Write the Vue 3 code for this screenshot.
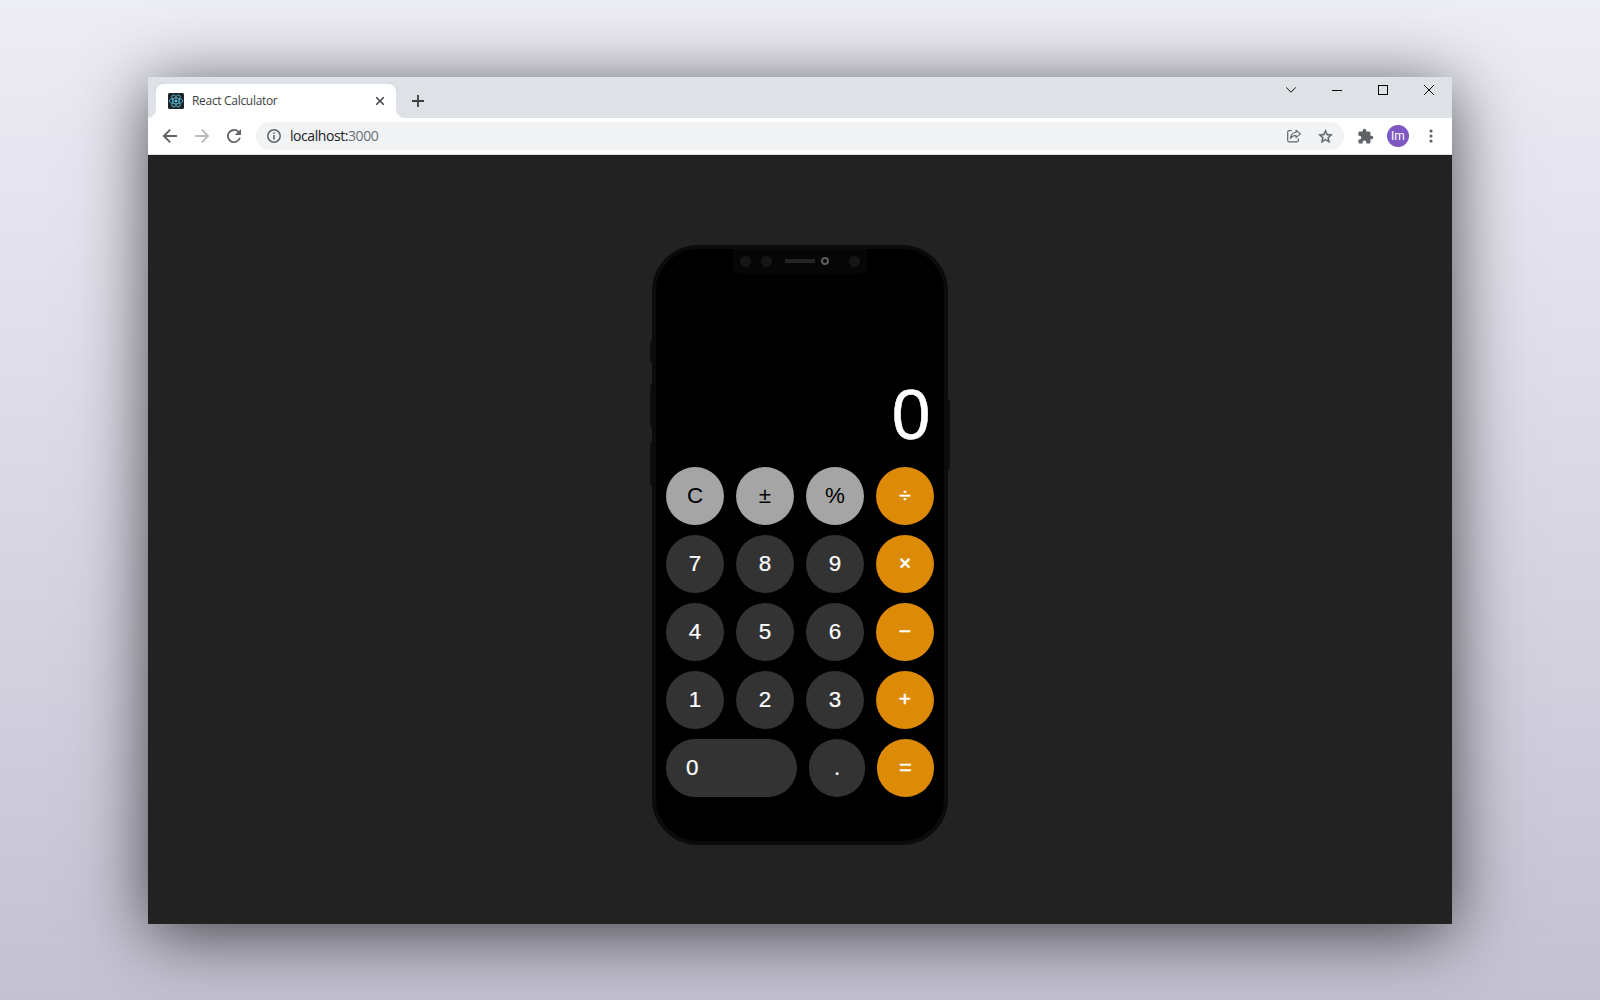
<script setup>
const rows = [
  [['C', 'light'], ['±', 'light'], ['%', 'light'], ['÷', 'op']],
  [['7', ''], ['8', ''], ['9', ''], ['×', 'op times']],
  [['4', ''], ['5', ''], ['6', ''], ['−', 'op']],
  [['1', ''], ['2', ''], ['3', ''], ['+', 'op']],
  [['0', 'zero'], ['.', 'dot'], ['=', 'op eq']],
]
</script>

<template>
  <main class="stage">
    <section class="window">
      <header class="tabbar">
        <div class="tab">
          <svg class="favicon" viewBox="0 0 16 16" width="16" height="16">
            <rect width="16" height="16" rx="1.5" fill="#202225" />
            <g fill="none" stroke="#4fb3cf" stroke-width=".85">
              <ellipse cx="8" cy="8" rx="6.8" ry="2.8" />
              <ellipse cx="8" cy="8" rx="6.8" ry="2.8" transform="rotate(60 8 8)" />
              <ellipse cx="8" cy="8" rx="6.8" ry="2.8" transform="rotate(120 8 8)" />
            </g>
            <circle cx="8" cy="8" r="1.3" fill="#61dafb" />
          </svg>
          <span class="title">React Calculator</span>
          <svg class="tab-close" viewBox="0 0 10 10" width="10" height="10">
            <path d="M1.2 1.2 8.8 8.8M8.8 1.2 1.2 8.8" stroke="#45494d" stroke-width="1.6" />
          </svg>
        </div>
        <svg class="plus" viewBox="0 0 12 12" width="12" height="12">
          <path d="M6 0V12M0 6H12" stroke="#3c4043" stroke-width="1.8" />
        </svg>
        <div class="controls">
          <svg viewBox="0 0 10 10" width="10" height="10"><path d="M.2 2.3 5 7.3 9.8 2.3" fill="none" stroke="#111" /></svg>
          <svg viewBox="0 0 10 10" width="10" height="10"><path d="M0 5.5H10" stroke="#000" /></svg>
          <svg viewBox="0 0 10 10" width="10" height="10"><rect x=".5" y=".5" width="9" height="9" fill="none" stroke="#000" /></svg>
          <svg viewBox="0 0 10 10" width="10" height="10"><path d="M0 0 10 10M10 0 0 10" stroke="#000" /></svg>
        </div>
      </header>

      <nav class="toolbar">
        <svg class="nav-icon" viewBox="0 0 16 16" width="16" height="16">
          <path d="M15 8H2.4M8.2 1.7 1.9 8l6.3 6.3" fill="none" stroke="#5f6368" stroke-width="1.9" />
        </svg>
        <svg class="nav-icon" viewBox="0 0 16 16" width="16" height="16">
          <path d="M1 8H13.6M7.8 1.7 14.1 8l-6.3 6.3" fill="none" stroke="#babcbe" stroke-width="1.9" />
        </svg>
        <svg class="nav-icon" viewBox="0 0 16 16" width="16" height="16">
          <path d="M12.95 3.05A7 7 0 1 0 14.8 9.8h-1.9A5.2 5.2 0 1 1 11.6 4.3L8.8 7.1H15V1Z" fill="#5f6368" />
        </svg>
        <div class="omnibox">
          <svg viewBox="0 0 14 14" width="14" height="14">
            <circle cx="7" cy="7" r="6.2" fill="none" stroke="#5f6368" stroke-width="1.5" />
            <path d="M7 6.1V10.4M7 3.4V5" stroke="#5f6368" stroke-width="1.6" />
          </svg>
          <span class="url">localhost:<span class="port">3000</span></span>
          <svg class="share" viewBox="0 0 14 14" width="14" height="14">
            <path d="M4.6 1.7H2.2Q.7 1.7.7 3.2V11.3Q.7 12.8 2.2 12.8H9.9Q11.4 12.8 11.4 11.3V9.6" fill="none" stroke="#5f6368" stroke-width="1.2" />
            <path d="M9 1.2 13.3 4.9 9 8.6V6.5C6.4 6.4 4.7 7.3 3.4 9.4 3.8 6.2 5.6 3.7 9 3.3Z" fill="none" stroke="#5f6368" stroke-width="1.1" stroke-linejoin="round" />
          </svg>
          <svg class="star" viewBox="0 0 24 24" width="17" height="17">
            <path d="m22 9.24-7.19-.62L12 2 9.19 8.63 2 9.24l5.46 4.73L5.82 21 12 17.27 18.18 21l-1.63-7.03L22 9.24ZM12 15.4l-3.76 2.27 1-4.28-3.32-2.88 4.38-.38L12 6.1l1.71 4.04 4.38.38-3.32 2.88 1 4.28L12 15.4Z" fill="#5f6368" stroke="#5f6368" stroke-width=".5" />
          </svg>
        </div>
        <svg class="puzzle" viewBox="0 0 24 24" width="17" height="17">
          <path d="M20.5 11H19V7c0-1.1-.9-2-2-2h-4V3.5a2.5 2.5 0 0 0-5 0V5H4c-1.1 0-2 .9-2 2v3.8h1.5a2.7 2.7 0 0 1 0 5.4H2V20c0 1.1.9 2 2 2h3.8v-1.5a2.7 2.7 0 0 1 5.4 0V22H17c1.1 0 2-.9 2-2v-4h1.5a2.5 2.5 0 0 0 0-5Z" fill="#5f6368" />
        </svg>
        <span class="avatar">Im</span>
        <svg class="dots" viewBox="0 0 4 14" width="4" height="14" fill="#5f6368">
          <circle cx="2" cy="2" r="1.6" /><circle cx="2" cy="7" r="1.6" /><circle cx="2" cy="12" r="1.6" />
        </svg>
      </nav>

      <div class="page">
        <div class="phone">
          <i class="side mute"></i><i class="side up"></i><i class="side down"></i><i class="side power"></i>
          <div class="notch">
            <i class="sensor"></i><i class="sensor second"></i><i class="speaker"></i><i class="camera"></i><i class="sensor last"></i>
          </div>
          <div class="display">0</div>
          <div class="keys">
            <div v-for="(row, i) in rows" :key="i" class="row">
              <button v-for="[label, kind] in row" :key="label" class="key" :class="kind">{{ label }}</button>
            </div>
          </div>
        </div>
      </div>
    </section>
  </main>
</template>

<style>
body { margin: 0; overflow: hidden; }
</style>

<style scoped>
* { box-sizing: border-box; }
svg { display: block; flex: none; }
.stage {
  height: 1000px;
  padding: 77px 148px 76px;
  background: linear-gradient(#ededf6, #c4c2d2);
}
.window {
  height: 847px;
  display: flex;
  flex-direction: column;
  background: #222;
  box-shadow: 0 10px 66px rgba(0, 0, 0, .68);
  font-family: "Open Sans", "Noto Sans", sans-serif;
}
.tabbar {
  height: 41px;
  display: flex;
  align-items: flex-start;
  padding-left: 8px;
  background: #dee1e6;
}
.tab {
  position: relative;
  width: 240px;
  height: 34px;
  margin-top: 7px;
  padding: 0 11px 0 12px;
  display: flex;
  align-items: center;
  background: #fff;
  border-radius: 8px 8px 0 0;
}
.tab::before, .tab::after {
  content: "";
  position: absolute;
  bottom: 0;
  width: 8px;
  height: 8px;
}
.tab::before { left: -8px; background: radial-gradient(circle at 0 0, transparent 7.5px, #fff 8px); }
.tab::after { right: -8px; background: radial-gradient(circle at 100% 0, transparent 7.5px, #fff 8px); }
.title {
  margin-left: 8px;
  padding-bottom: 1px;
  flex: 1;
  font-size: 12px;
  letter-spacing: -.31px;
  color: #3c4043;
  white-space: nowrap;
}
.plus { margin: 18px 0 0 16px; }
.controls {
  margin: 8px 18px 0 auto;
  display: flex;
  gap: 36px;
}
.toolbar {
  height: 37px;
  display: flex;
  align-items: center;
  padding-left: 14px;
  background: #fff;
  border-bottom: 1px solid #dcdee0;
}
.nav-icon { margin-right: 16px; }
.omnibox {
  width: 1088px;
  height: 28px;
  margin-left: -2px;
  padding: 0 10px 0 11px;
  display: flex;
  align-items: center;
  border-radius: 14px;
  background: #f1f3f4;
}
.url {
  margin-left: 9px;
  padding-bottom: 2px;
  flex: 1;
  font-size: 14px;
  letter-spacing: -.43px;
  color: #202124;
}
.port { color: #6c7075; }
.share { margin-right: 16px; }
.puzzle { margin-left: 13px; }
.avatar {
  width: 22px;
  height: 22px;
  margin-left: 13px;
  border-radius: 50%;
  background: #7e57c2;
  color: #fff;
  font: 12px/22px Roboto, sans-serif;
  text-align: center;
}
.dots { margin-left: 19.5px; }
.page {
  flex: 1;
  display: flex;
  justify-content: center;
  padding-top: 90px;
}
.phone {
  position: relative;
  width: 296px;
  height: 600px;
  padding: 0 10px;
  border: 4px solid #0b0b0b;
  border-radius: 46px;
  background: #000;
  font-family: "Liberation Sans", Arial, sans-serif;
}
.side { position: absolute; left: -6px; width: 2px; background: #101010; border-radius: 2px 0 0 2px; }
.mute { top: 91px; height: 23px; }
.up { top: 135px; height: 44px; }
.down { top: 192px; height: 45px; }
.power { left: auto; right: -6px; top: 150px; height: 72px; border-radius: 0 2px 2px 0; }
.notch {
  width: 134px;
  height: 25px;
  margin: 0 auto 1px;
  padding: 0 7px 1px;
  display: flex;
  align-items: center;
  border-radius: 0 0 8px 8px;
  background: #060606;
}
.sensor { width: 11px; height: 11px; border-radius: 50%; background: #151515; }
.second { margin-left: 10px; }
.speaker { width: 30px; height: 4px; margin-left: 13px; border-radius: 1px; background: #242424; }
.camera { width: 8px; height: 8px; margin-left: 6px; border: 2px solid #5c5c5c; border-radius: 50%; }
.last { margin-left: 20px; }
.display {
  height: 192px;
  padding-right: 3.5px;
  display: flex;
  align-items: flex-end;
  justify-content: flex-end;
  color: #fff;
  font-size: 69.5px;
  line-height: 104px;
  -webkit-text-stroke: .5px #fff;
}
.keys { display: flex; flex-direction: column; gap: 10px; }
.row { display: flex; gap: 12px; }
.key {
  width: 58px;
  height: 58px;
  padding: 0 0 1px;
  border: 0;
  border-radius: 29px;
  background: #333;
  color: #fff;
  font: 22.4px/55px "Liberation Sans", Arial, sans-serif;
  -webkit-text-stroke: .2px currentColor;
}
.light { background: #a5a5a5; color: #000; -webkit-text-stroke-width: 0; }
.op { padding-bottom: 3px; background: #dd8b06; font-size: 21px; -webkit-text-stroke-width: .5px; }
.times { padding-bottom: 1px; font-size: 20px; -webkit-text-stroke-width: .8px; }
.zero { width: 131px; padding-left: 20px; text-align: left; }
.dot { width: 56px; }
.eq { width: 57px; padding-bottom: 1px; font-size: 22px; -webkit-text-stroke-width: .3px; }
</style>
